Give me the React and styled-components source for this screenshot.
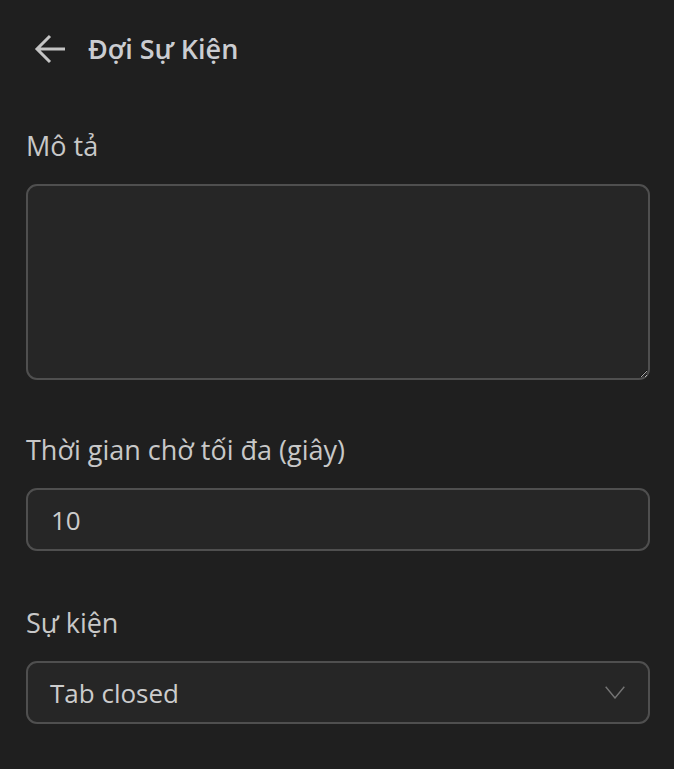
import React from 'react'
import styled, { createGlobalStyle } from 'styled-components'

const GlobalStyle = createGlobalStyle`
  html, body {
    margin: 0;
    padding: 0;
    background: #1f1f1f;
  }
  body {
    font-family: "Open Sans", "Noto Sans", sans-serif;
    color: #cccccc;
  }
`

const Page = styled.div`
  width: 674px;
  min-height: 769px;
  box-sizing: border-box;
  padding: 24px 24px 0 26px;
  background: #1f1f1f;
`

const Header = styled.div`
  display: flex;
  align-items: center;
  gap: 22px;
  height: 50px;
  margin-left: 8px;
`

const BackButton = styled.button`
  display: flex;
  align-items: center;
  justify-content: center;
  padding: 0;
  border: none;
  background: transparent;
  cursor: pointer;
`

const Title = styled.h1`
  margin: 0;
  font-size: 27px;
  line-height: 36px;
  font-weight: 600;
  color: #cbcdd1;
`

const Field = styled.div`
  display: flex;
  flex-direction: column;
  margin-top: ${(p) => p.$top}px;
`

const Label = styled.label`
  font-size: 27px;
  line-height: 36px;
  color: #c8c8c8;
  margin-bottom: 20px;
`

const boxStyle = `
  box-sizing: border-box;
  width: 100%;
  background: #262626;
  border: 2px solid #4f4f4f;
  border-radius: 11px;
  color: #cccccc;
  font-family: inherit;
  font-size: 26px;
  outline: none;
`

const TextArea = styled.textarea`
  ${boxStyle}
  height: 196px;
  resize: vertical;
  padding: 12px 22px;
  color-scheme: dark;
`

const Input = styled.input`
  ${boxStyle}
  height: 63px;
  padding: 0 22px 0 23px;
`

const SelectBox = styled.div`
  ${boxStyle}
  display: flex;
  align-items: center;
  justify-content: space-between;
  height: 63px;
  padding: 0 23px 0 22px;
`

const Chevron = () => (
  <svg width="20" height="13" viewBox="0 0 20 13" fill="none">
    <path d="M0.7 0.7 L10 12 L19.3 0.7" stroke="#747474" strokeWidth="1.4" />
  </svg>
)

const ArrowLeft = () => (
  <svg width="32" height="30" viewBox="0 0 32 30" fill="none">
    <path d="M31 15 H3 M16 2 L3 15 L16 28" stroke="#c4c4c4" strokeWidth="3" />
  </svg>
)

export default function App() {
  return (
    <Page>
      <GlobalStyle />
      <Header>
        <BackButton aria-label="Back">
          <ArrowLeft />
        </BackButton>
        <Title>Đợi Sự Kiện</Title>
      </Header>

      <Field $top={54}>
        <Label>Mô tả</Label>
        <TextArea />
      </Field>

      <Field $top={52}>
        <Label>Thời gian chờ tối đa (giây)</Label>
        <Input defaultValue="10" />
      </Field>

      <Field $top={54}>
        <Label>Sự kiện</Label>
        <SelectBox>
          <span>Tab closed</span>
          <Chevron />
        </SelectBox>
      </Field>
    </Page>
  )
}
